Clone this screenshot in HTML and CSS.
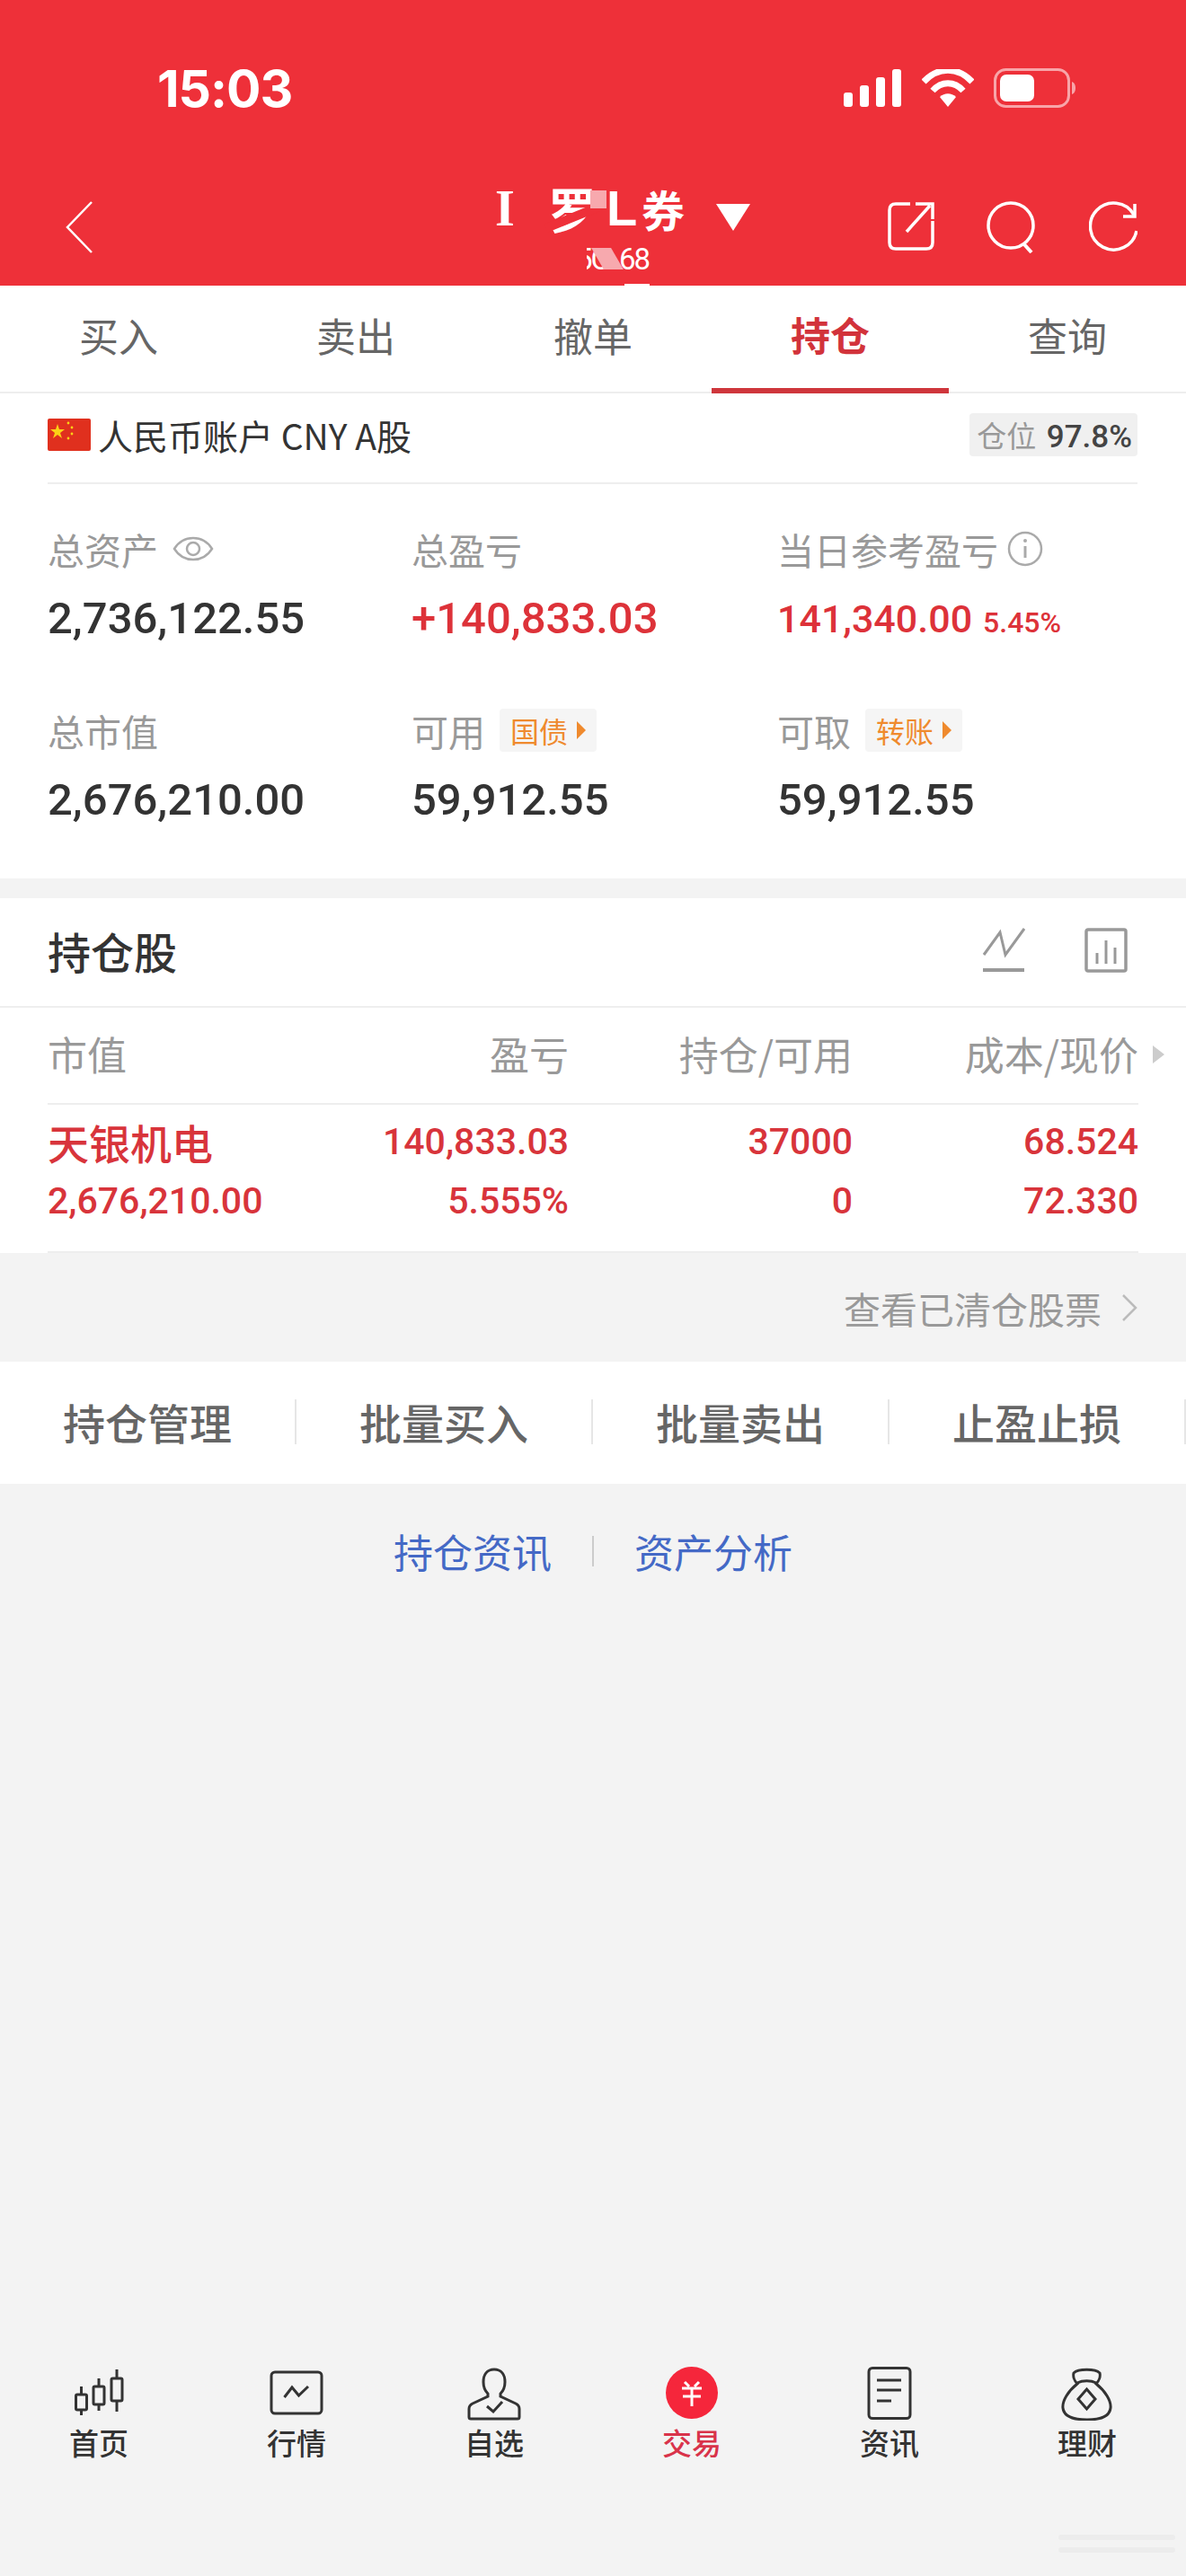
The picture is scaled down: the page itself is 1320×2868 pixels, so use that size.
FILE: index.html
```html
<!DOCTYPE html>
<html lang="zh-CN">
<head>
  <meta charset="UTF-8">
  <title>持仓</title>
  <link rel="stylesheet" href="styles.css">
</head>
<body>
  <div class="page">
    <header class="header">
      <div class="status">
        <span class="time">15:03</span>
        <div class="status-icons">
          <svg class="signal" width="66" height="42" viewBox="0 0 66 42"><rect x="0" y="26" width="10" height="16" rx="3"/><rect x="18" y="18" width="10" height="24" rx="3"/><rect x="36" y="9" width="10" height="33" rx="3"/><rect x="54" y="0" width="10" height="42" rx="3"/></svg>
          <svg class="wifi" width="58" height="42" viewBox="0 0 58 42"><path d="M2 14C18 -3 40 -3 56 14" fill="none" stroke="#fff" stroke-width="7"/><path d="M12 24C22 13 36 13 46 24" fill="none" stroke="#fff" stroke-width="7"/><path d="M20 31C25 26 33 26 38 31L29 42Z" fill="#fff"/></svg>
          <svg class="battery" width="92" height="44" viewBox="0 0 92 44"><rect x="1.5" y="1.5" width="82" height="41" rx="12" fill="none" stroke="#f8a5a9" stroke-width="3"/><rect x="7" y="7" width="38" height="30" rx="7" fill="#fff"/><path d="M87 15c3 1 4 4 4 7s-1 6-4 7z" fill="#f8a5a9"/></svg>
        </div>
      </div>
      <div class="nav">
        <svg class="back" width="30" height="58" viewBox="0 0 30 58"><path d="M29 1L2 29L29 57" fill="none" stroke="#fff" stroke-width="2.5"/></svg>
        <div class="title">
          <div class="title-name"><span class="t1">I</span><span class="t2">罗</span><span class="t3">L</span><span class="t4">券</span></div>
          <div class="title-code">5C<span class="code-end">68</span></div>
          <i class="mask mask-a"></i>
          <i class="mask mask-b"></i>
          <i class="smear smear-a"></i>
          <i class="smear smear-b"></i>
        </div>
        <svg class="caret" width="38" height="30" viewBox="0 0 38 30"><path d="M0 0H38L19 30Z" fill="#fff"/></svg>
        <svg class="nav-icon share" width="54" height="56" viewBox="0 0 54 56"><path d="M26 3H10Q3 3 3 10V46Q3 53 10 53H44Q51 53 51 46V22M22 34L48 5M32 3H51V20" fill="none" stroke="#fff" stroke-width="3.5"/></svg>
        <svg class="nav-icon search" width="58" height="58" viewBox="0 0 58 58"><circle cx="28" cy="27" r="25" fill="none" stroke="#fff" stroke-width="3.5"/><path d="M42 47L51 57" fill="none" stroke="#fff" stroke-width="4"/></svg>
        <svg class="nav-icon refresh" width="54" height="58" viewBox="0 0 54 58"><path d="M50 15A26 26 0 1 0 53 33" fill="none" stroke="#fff" stroke-width="3.5"/><path d="M51 3V17H38" fill="none" stroke="#fff" stroke-width="3.5"/></svg>
      </div>
      <i class="title-nub"></i>
    </header>

    <nav class="tabs">
      <div class="tab">买入</div>
      <div class="tab">卖出</div>
      <div class="tab">撤单</div>
      <div class="tab active">持仓</div>
      <div class="tab">查询</div>
    </nav>

    <section class="account">
      <div class="account-head">
        <svg class="flag" width="48" height="36" viewBox="0 0 48 36"><rect width="48" height="36" rx="2" fill="#e0301e"/><path d="M11 6l2 6h6l-5 4 2 6-5-4-5 4 2-6-5-4h6z" fill="#fbd116"/><g fill="#fbd116"><circle cx="23" cy="5" r="1.4"/><circle cx="27" cy="10" r="1.4"/><circle cx="27" cy="17" r="1.4"/><circle cx="23" cy="22" r="1.4"/></g></svg>
        <span class="account-name">人民币账户 CNY A股</span>
        <div class="position"><span class="position-label">仓位</span> <span class="position-num">97.8%</span></div>
      </div>
      <div class="stats">
        <div class="stat">
          <div class="stat-label">总资产
            <svg class="label-icon" width="46" height="34" viewBox="0 0 46 34"><path d="M2 17C12 1 34 1 44 17C34 33 12 33 2 17Z" fill="none" stroke="#aaa" stroke-width="2.5"/><circle cx="23" cy="17" r="7" fill="none" stroke="#aaa" stroke-width="2.5"/></svg>
          </div>
          <div class="stat-value">2,736,122.55</div>
        </div>
        <div class="stat">
          <div class="stat-label">总盈亏</div>
          <div class="stat-value up">+140,833.03</div>
        </div>
        <div class="stat">
          <div class="stat-label">当日参考盈亏
            <svg class="label-icon info" width="40" height="40" viewBox="0 0 40 40"><circle cx="20" cy="20" r="18" fill="none" stroke="#aaa" stroke-width="2.5"/><path d="M20 17V30" stroke="#aaa" stroke-width="3"/><circle cx="20" cy="11" r="2" fill="#aaa"/></svg>
          </div>
          <div class="stat-value up day"><span class="day-num">141,340.00</span><span class="day-pct">5.45%</span></div>
        </div>
        <div class="stat">
          <div class="stat-label">总市值</div>
          <div class="stat-value">2,676,210.00</div>
        </div>
        <div class="stat">
          <div class="stat-label">可用 <span class="chip">国债<i class="chip-arrow"></i></span></div>
          <div class="stat-value">59,912.55</div>
        </div>
        <div class="stat">
          <div class="stat-label">可取 <span class="chip">转账<i class="chip-arrow"></i></span></div>
          <div class="stat-value">59,912.55</div>
        </div>
      </div>
    </section>

    <section class="holdings">
      <div class="holdings-head">
        <h2>持仓股</h2>
        <svg class="hold-icon line" width="48" height="50" viewBox="0 0 48 50"><path d="M2 30L20 5L26 30L47 1" fill="none" stroke="#999" stroke-width="3"/><path d="M1 47H47" stroke="#999" stroke-width="4"/></svg>
        <svg class="hold-icon" width="48" height="50" viewBox="0 0 48 50"><rect x="2" y="2" width="44" height="46" rx="2" fill="none" stroke="#999" stroke-width="3.5"/><path d="M14 28V40M24 14V40M34 22V40" stroke="#999" stroke-width="3"/></svg>
      </div>
      <div class="table-head">
        <span>市值</span>
        <span class="num">盈亏</span>
        <span class="num">持仓/可用</span>
        <span class="num">成本/现价</span>
        <i class="more"></i>
      </div>
      <div class="table-row">
        <span class="stock">天银机电</span>
        <span class="num">140,833.03</span>
        <span class="num">37000</span>
        <span class="num">68.524</span>
        <span>2,676,210.00</span>
        <span class="num">5.555%</span>
        <span class="num">0</span>
        <span class="num">72.330</span>
      </div>
    </section>

    <div class="cleared">
      <span>查看已清仓股票</span>
      <svg width="18" height="32" viewBox="0 0 18 32"><path d="M2 2L16 16L2 30" fill="none" stroke="#bbb" stroke-width="2.5"/></svg>
    </div>

    <div class="actions">
      <div class="action">持仓管理</div>
      <div class="action">批量买入</div>
      <div class="action">批量卖出</div>
      <div class="action">止盈止损</div>
    </div>

    <div class="links">
      <span>持仓资讯</span>
      <i class="links-sep"></i>
      <span>资产分析</span>
    </div>

    <footer class="tabbar">
      <div class="bar-item">
        <svg width="60" height="60" viewBox="0 0 60 60"><g fill="none" stroke="#333" stroke-width="3"><rect x="4.5" y="31" width="12" height="17" rx="1.5"/><path d="M10.5 22V31M10.5 48V54"/><rect x="24" y="22" width="12" height="20" rx="1.5"/><path d="M30 13V22M30 42V49"/><rect x="44" y="13" width="12" height="25" rx="1.5"/><path d="M50 3V13M50 38V50"/></g></svg>
        <span>首页</span>
      </div>
      <div class="bar-item">
        <svg width="60" height="60" viewBox="0 0 60 60"><rect x="2" y="6" width="56" height="46" rx="4" fill="none" stroke="#333" stroke-width="3"/><path d="M16.5 34L25 23L32.5 32L43 22" fill="none" stroke="#333" stroke-width="3"/></svg>
        <span>行情</span>
      </div>
      <div class="bar-item">
        <svg width="60" height="60" viewBox="0 0 60 60"><path d="M30 3C22 3 18 9 18 17C18 23 20 27 23 30V33L6 41Q2 43 2 47V56Q2 58 4 58H56Q58 58 58 56V47Q58 43 54 41L37 33V30C40 27 42 23 42 17C42 9 38 3 30 3Z" fill="none" stroke="#333" stroke-width="3"/><path d="M22 44L29 50L39 39" fill="none" stroke="#333" stroke-width="3"/></svg>
        <span>自选</span>
      </div>
      <div class="bar-item current">
        <svg width="60" height="60" viewBox="0 0 60 60"><circle cx="30" cy="29" r="29" fill="#f5263b"/><path d="M22 17L27 22M38 17L33 22M19 24H41M20 33H40M30 23V44" fill="none" stroke="#fff" stroke-width="3"/></svg>
        <span>交易</span>
      </div>
      <div class="bar-item">
        <svg width="60" height="60" viewBox="0 0 60 60"><rect x="7" y="1.5" width="46" height="56" rx="4" fill="none" stroke="#333" stroke-width="3"/><path d="M16 15H43M16 26H43M16 38H32" stroke="#333" stroke-width="3"/></svg>
        <span>资讯</span>
      </div>
      <div class="bar-item">
        <svg width="60" height="60" viewBox="0 0 60 60"><path d="M19 19C16 16 14 11 15 7C20 2 39 2 44 7C45 11 43 16 40 19C50 27 57 38 56 46C55 55 46 59 30 59C13 59 4 55 3 46C2 38 9 27 19 19Z" fill="none" stroke="#333" stroke-width="3"/><path d="M19 18C25 15 34 15 40 18" fill="none" stroke="#333" stroke-width="3"/><path d="M29.5 25L39 36L29.5 47L20 36Z" fill="none" stroke="#333" stroke-width="3"/></svg>
        <span>理财</span>
      </div>
    </footer>
    <i class="mark mark-a"></i>
    <i class="mark mark-b"></i>
  </div>
</body>
</html>
```

FILE: styles.css
```css
* {
  box-sizing: border-box;
}

body {
  margin: 0;
  background: #f3f3f3;
  font-family: "Noto Sans CJK SC", Roboto, sans-serif;
  color: #333;
}

i {
  display: block;
}

.page {
  position: relative;
  display: flex;
  flex-direction: column;
  width: 1320px;
  height: 2868px;
  overflow: hidden;
}

/* header */
.header {
  position: relative;
  height: 318px;
  background: #ee3039;
  flex: none;
}

.status {
  display: flex;
  justify-content: space-between;
  align-items: center;
  height: 200px;
  padding: 0 122px 4px 175px;
}

.time {
  font-family: Inter, sans-serif;
  font-weight: 700;
  font-size: 57px;
  color: #fff;
  letter-spacing: -1px;
}

.status-icons {
  display: flex;
  align-items: center;
}

.signal {
  fill: #fff;
}

.wifi {
  margin-left: 21px;
}

.battery {
  margin-left: 22px;
}

.nav {
  display: flex;
  align-items: flex-start;
  padding-left: 73px;
}

.back {
  margin-top: 24px;
}

.title {
  position: relative;
  width: 213px;
  margin-left: 446px;
  margin-top: 10px;
  color: #fff;
}

.title-name {
  display: flex;
  height: 44px;
  line-height: 44px;
  font-size: 48px;
  font-weight: 700;
  white-space: nowrap;
}

.t1 {
  width: 26px;
  font-family: "Liberation Serif", serif;
  font-size: 56px;
  text-align: center;
}

.t2 {
  width: 54px;
  margin-left: 35px;
  font-size: 54px;
}

.t3 {
  width: 35px;
  margin-left: 11px;
  font-family: "Liberation Sans", sans-serif;
  font-size: 56px;
}

.t4 {
  width: 48px;
  margin-left: 4px;
}

.title-code {
  margin: 20px 0 0 92px;
  height: 30px;
  line-height: 30px;
  font-family: Roboto, sans-serif;
  font-size: 33px;
  letter-spacing: -2px;
}

.code-end {
  margin-left: 12px;
}

/* the redaction smears over the account name */
.mask,
.smear {
  position: absolute;
}

.mask {
  background: #ee3039;
}

.mask-a {
  left: 56px;
  top: 26px;
  width: 70px;
  height: 10px;
  transform: rotate(-22deg);
}

.mask-b {
  left: 76px;
  top: 62px;
  width: 28px;
  height: 32px;
}

.smear {
  background: #f7a9ae;
}

.smear-a {
  left: 108px;
  top: 2px;
  width: 18px;
  height: 20px;
}

.smear-b {
  left: 116px;
  top: 66px;
  width: 22px;
  height: 24px;
  transform: skewX(30deg);
}

.title-nub {
  position: absolute;
  left: 695px;
  bottom: 0;
  width: 28px;
  height: 2px;
  background: #fff;
}

.caret {
  margin: 27px 0 0 35px;
}

.nav-icon {
  margin-top: 24px;
}

.share {
  margin-left: 152px;
}

.search {
  margin-left: 56px;
}

.refresh {
  margin-left: 57px;
}

/* tabs */
.tabs {
  display: flex;
  height: 120px;
  background: #fff;
  border-bottom: 2px solid #eee;
  flex: none;
}

.tab {
  width: 264px;
  text-align: center;
  line-height: 111px;
  font-size: 44px;
  color: #666;
}

.tab.active {
  line-height: 108px;
  color: #d2333b;
  font-weight: 700;
  border-bottom: 6px solid #cf363c;
  height: 120px;
}

/* account */
.account {
  height: 540px;
  background: #fff;
  flex: none;
}

.account-head {
  display: flex;
  align-items: center;
  height: 101px;
  margin: 0 54px 0 53px;
  padding-bottom: 8px;
  border-bottom: 2px solid #eee;
}

.account-name {
  margin-left: 8px;
  font-size: 39px;
  color: #333;
}

.position {
  margin-left: auto;
  height: 48px;
  line-height: 48px;
  padding: 0 6px 0 8px;
  background: #f0f0f0;
  border-radius: 4px;
  white-space: nowrap;
}

.position-label {
  font-size: 33px;
  margin-right: 8px;
  color: #999;
}

.position-num {
  font-family: Roboto, sans-serif;
  font-size: 35px;
  font-weight: 500;
  color: #444;
}

.stats {
  display: grid;
  grid-template-columns: 405px 407px 400px;
  row-gap: 66px;
  padding: 44px 0 0 53px;
}

.stat-label {
  display: flex;
  align-items: center;
  height: 56px;
  font-size: 41px;
  color: #999;
}

.label-icon {
  margin-left: 16px;
}

.label-icon.info {
  margin-left: 10px;
}

.stat-value {
  height: 60px;
  margin-top: 20px;
  line-height: 60px;
  font-family: Roboto, sans-serif;
  font-size: 49px;
  font-weight: 500;
  color: #333;
  white-space: nowrap;
}

.up {
  color: #dd3239;
}

.day {
  font-size: 43px;
  display: flex;
  align-items: baseline;
}

.day-pct {
  margin-left: 12px;
  font-size: 32px;
}

.chip {
  display: flex;
  align-items: center;
  height: 48px;
  margin-left: 16px;
  padding: 0 12px;
  background: #f5f5f5;
  border-radius: 4px;
  font-size: 32px;
  color: #ef8a2d;
}

.chip-arrow {
  width: 0;
  height: 0;
  margin-left: 10px;
  border-left: 10px solid #ef8a2d;
  border-top: 10px solid transparent;
  border-bottom: 10px solid transparent;
}

/* holdings */
.holdings {
  margin-top: 22px;
  background: #fff;
  flex: none;
}

.holdings-head {
  display: flex;
  align-items: center;
  height: 122px;
  padding: 0 65px 4px 53px;
  border-bottom: 2px solid #eee;
}

.holdings-head h2 {
  margin: 0 auto 0 0;
  font-size: 48px;
  font-weight: 500;
  color: #333;
}

.hold-icon.line {
  margin-right: 66px;
}

.table-head,
.table-row {
  display: grid;
  grid-template-columns: 301px 279px 316px 318px;
  margin: 0 53px;
}

.table-head {
  position: relative;
  height: 108px;
  line-height: 102px;
  font-size: 44px;
  color: #999;
  border-bottom: 2px solid #eee;
}

.num {
  text-align: right;
}

.more {
  position: absolute;
  right: -29px;
  top: 42px;
  width: 0;
  height: 0;
  border-left: 13px solid #ccc;
  border-top: 10px solid transparent;
  border-bottom: 10px solid transparent;
}

.table-row {
  height: 165px;
  padding-top: 8px;
  grid-auto-rows: 66px;
  align-items: center;
  font-family: Roboto, sans-serif;
  font-size: 41px;
  font-weight: 500;
  color: #d8343b;
  border-bottom: 2px solid #eee;
}

.stock {
  font-family: "Noto Sans CJK SC", sans-serif;
  font-size: 46px;
  font-weight: 500;
}

.cleared {
  display: flex;
  justify-content: flex-end;
  align-items: center;
  height: 121px;
  padding-right: 54px;
  font-size: 41px;
  color: #999;
  flex: none;
}

.cleared svg {
  margin-left: 22px;
}

.actions {
  display: flex;
  align-items: center;
  height: 136px;
  padding-bottom: 2px;
  background: #fff;
  flex: none;
}

.action {
  width: 330px;
  height: 50px;
  line-height: 50px;
  text-align: center;
  font-size: 47px;
  font-weight: 500;
  color: #666;
  border-right: 2px solid #e6e6e6;
}

.links {
  display: flex;
  justify-content: center;
  align-items: center;
  height: 150px;
  font-size: 44px;
  color: #4469c6;
  flex: none;
}

.links-sep {
  width: 2px;
  height: 34px;
  margin: 0 45px;
  background: #ccc;
}

/* bottom bar */
.tabbar {
  display: flex;
  margin-top: auto;
  height: 233px;
  flex: none;
}

.bar-item {
  display: flex;
  flex-direction: column;
  align-items: center;
  width: 220px;
  font-size: 33px;
  font-weight: 500;
  color: #333;
}

.bar-item span {
  margin-top: 4px;
  line-height: 40px;
}

.bar-item.current {
  color: #d9334a;
}

.mark {
  position: absolute;
  right: 12px;
  width: 130px;
  height: 6px;
  border-radius: 3px;
  background: #ececec;
}

.mark-a {
  top: 2822px;
}

.mark-b {
  top: 2836px;
}
```
